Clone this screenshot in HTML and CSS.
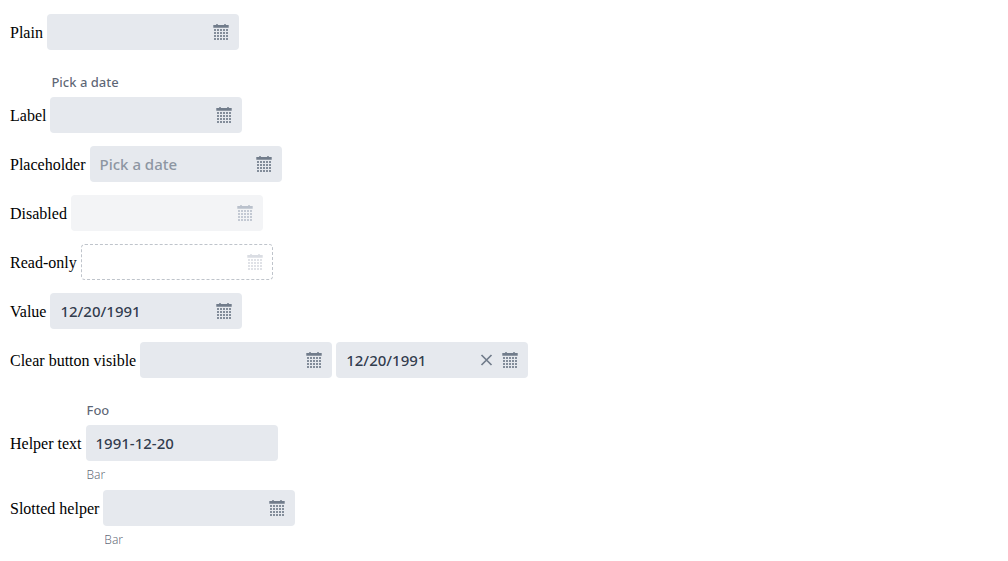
FILE: index.html
```html
<!DOCTYPE html>
<html lang="en">
<head>
<meta charset="utf-8">
<title>Date picker</title>
<link rel="stylesheet" href="styles.css">
</head>
<body>
<svg class="sprite" aria-hidden="true">
  <symbol id="calendar" viewBox="0 0 16 16">
    <path d="M.3 1H3V.3h2V1h6V.3h2V1h2.700v2.700H.3z"/>
    <path d="M1 5h2v2H1zm3 0h2v2H4zm3 0h2v2H7zm3 0h2v2h-2zm3 0h2v2h-2zM1 8h2v2H1zm3 0h2v2H4zm3 0h2v2H7zm3 0h2v2h-2zm3 0h2v2h-2zM1 11h2v2H1zm3 0h2v2H4zm3 0h2v2H7zm3 0h2v2h-2zm3 0h2v2h-2zM1 14h2v2H1zm3 0h2v2H4zm3 0h2v2H7zm3 0h2v2h-2zm3 0h2v2h-2z" opacity=".85"/>
  </symbol>
  <symbol id="clear" viewBox="0 0 16 16">
    <path d="M3.500 3l10 10M13.500 3l-10 10" fill="none" stroke="currentColor" stroke-width="1.700"/>
  </symbol>
</svg>
<main class="samples">
  <div class="row">
    <label class="caption" for="plain">Plain</label>
    <div class="field"><input class="value" id="plain" type="text"><button class="toggle" type="button" aria-label="Calendar"><svg class="icon"><use href="#calendar"/></svg></button></div>
  </div>
  <div class="row">
    <label class="field-label" for="labelled">Pick a date</label>
    <span class="caption">Label</span>
    <div class="field"><input class="value" id="labelled" type="text"><button class="toggle" type="button" aria-label="Calendar"><svg class="icon"><use href="#calendar"/></svg></button></div>
  </div>
  <div class="row">
    <label class="caption" for="placeholder">Placeholder</label>
    <div class="field"><input class="value" id="placeholder" type="text" placeholder="Pick a date"><button class="toggle" type="button" aria-label="Calendar"><svg class="icon"><use href="#calendar"/></svg></button></div>
  </div>
  <div class="row">
    <label class="caption" for="disabled">Disabled</label>
    <div class="field disabled"><input class="value" id="disabled" type="text" disabled><button class="toggle" type="button" aria-label="Calendar" disabled><svg class="icon"><use href="#calendar"/></svg></button></div>
  </div>
  <div class="row">
    <label class="caption" for="readonly">Read-only</label>
    <div class="field readonly"><input class="value" id="readonly" type="text" readonly><button class="toggle" type="button" aria-label="Calendar" disabled><svg class="icon"><use href="#calendar"/></svg></button></div>
  </div>
  <div class="row">
    <label class="caption" for="value">Value</label>
    <div class="field"><input class="value" id="value" type="text" value="12/20/1991"><button class="toggle" type="button" aria-label="Calendar"><svg class="icon"><use href="#calendar"/></svg></button></div>
  </div>
  <div class="row">
    <label class="caption" for="clear-empty">Clear button visible</label>
    <div class="field"><input class="value" id="clear-empty" type="text"><button class="toggle" type="button" aria-label="Calendar"><svg class="icon"><use href="#calendar"/></svg></button></div>
    <div class="field"><input class="value" type="text" aria-label="Clear button visible, with value" value="12/20/1991"><button class="toggle" type="button" aria-label="Clear"><svg class="icon"><use href="#clear"/></svg></button><button class="toggle" type="button" aria-label="Calendar"><svg class="icon"><use href="#calendar"/></svg></button></div>
  </div>
  <div class="row with-helper">
    <label class="field-label" for="helper">Foo</label>
    <span class="caption">Helper text</span>
    <div class="field"><input class="value" id="helper" type="text" value="1991-12-20" aria-describedby="helper-note"></div>
    <div class="helper" id="helper-note">Bar</div>
  </div>
  <div class="row with-helper">
    <label class="caption" for="slotted">Slotted helper</label>
    <div class="field"><input class="value" id="slotted" type="text" aria-describedby="slotted-note"><button class="toggle" type="button" aria-label="Calendar"><svg class="icon"><use href="#calendar"/></svg></button></div>
    <div class="helper" id="slotted-note">Bar</div>
  </div>
</main>
</body>
</html>
```
FILE: styles.css
```css
* {
  box-sizing: border-box;
}

body {
  margin: 0;
  padding: 14px 10px;
  background: #fff;
  color: #000;
  font: 16px "Liberation Serif", "Times New Roman", serif;
}

.sprite {
  display: none;
}

.row {
  display: grid;
  grid-template-columns: repeat(3, max-content);
  column-gap: 4px;
  align-items: baseline;
  margin-bottom: 13px;
}

.with-helper {
  margin-bottom: 7px;
}

.caption {
  grid-column: 1;
}

.field-label,
.helper {
  grid-column: 2;
  padding-left: 1px;
  font-family: "Noto Sans", "Open Sans", sans-serif;
  color: hsla(214, 42%, 18%, 0.72);
}

.field-label {
  padding-top: 10px;
  padding-bottom: 6px;
  font-size: 13px;
  font-weight: 500;
  line-height: 18px;
}

.helper {
  padding-top: 6px;
  font-size: 12px;
  font-weight: 300;
  line-height: 16px;
}

.field {
  display: flex;
  align-items: center;
  gap: 8px;
  width: 192px;
  height: 36px;
  padding: 0 10px;
  border-radius: 4px;
  background: #e6e9ee;
}

.value {
  flex: 1;
  min-width: 0;
  height: 36px;
  padding: 0;
  border: 0;
  outline: 0;
  background: transparent;
  color: hsla(214, 40%, 16%, 0.9);
  font: 500 15px "Noto Sans", "Open Sans", sans-serif;
}

.value::placeholder {
  color: #8d96a2;
  opacity: 1;
}

.toggle {
  display: flex;
  padding: 0;
  border: 0;
  background: transparent;
  color: #717c8b;
}

.icon {
  width: 16px;
  height: 16px;
  fill: currentColor;
}

.disabled {
  background: #f3f4f6;
}

.disabled .toggle {
  color: #bac1cc;
}

.readonly {
  padding: 0 9px;
  border: 1px dashed #bfc4cb;
  background: transparent;
}

.readonly .toggle {
  color: #dadde3;
}
```
